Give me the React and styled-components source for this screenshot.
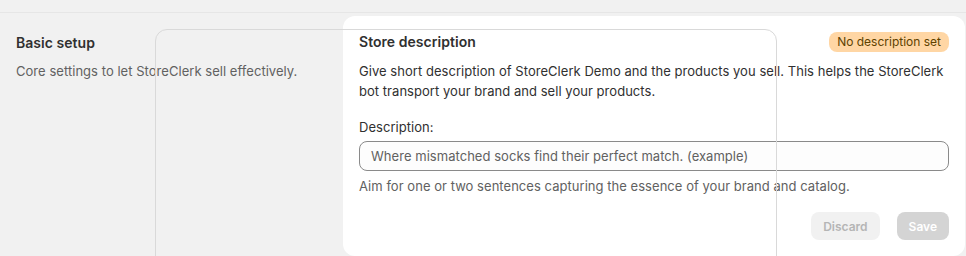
import React from "react";
import styled, { createGlobalStyle } from "styled-components";

const GlobalStyle = createGlobalStyle`
  html, body {
    margin: 0;
    padding: 0;
    background: #f1f1f1;
    font-family: Inter, "Noto Sans", sans-serif;
    letter-spacing: 0.04px;
    color: #303030;
    overflow: hidden;
  }
`;

const Page = styled.div`
  position: relative;
  width: 966px;
  height: 256px;
  overflow: hidden;
`;

const TopBar = styled.div`
  height: 12px;
  border-bottom: 1px solid #e6e6e6;
`;

const Section = styled.div`
  display: flex;
  padding: 3px 1px 0 16px;
`;

const Intro = styled.div`
  width: 327px;
  flex-shrink: 0;
  padding-top: 17px;
`;

const IntroTitle = styled.div`
  font-size: 14px;
  font-weight: 600;
  line-height: 20px;
  color: #303030;
`;

const IntroText = styled.div`
  margin-top: 8px;
  font-size: 13px;
  line-height: 20px;
  color: #616161;
`;

const Card = styled.div`
  flex: 1;
  background: #fff;
  border-radius: 12px;
  padding: 16px;
  display: flex;
  flex-direction: column;
`;

const CardHeader = styled.div`
  display: flex;
  justify-content: space-between;
  align-items: center;
  height: 20px;
`;

const CardTitle = styled.div`
  font-size: 14px;
  font-weight: 600;
  line-height: 20px;
`;

const Badge = styled.span`
  background: #ffd6a4;
  color: #5e4200;
  font-size: 12px;
  line-height: 20px;
  padding: 0 8px;
  border-radius: 8px;
  letter-spacing: 0;
`;

const Text = styled.p`
  margin: ${(p) => p.$mt || 0}px 0 0;
  font-size: 13px;
  line-height: 20px;
  color: ${(p) => (p.$muted ? "#616161" : "#303030")};
`;

const Label = styled.label`
  display: block;
  margin-top: 16px;
  font-size: 13px;
  line-height: 20px;
  color: #303030;
`;

const Input = styled.input`
  margin-top: 4px;
  height: 30px;
  box-sizing: border-box;
  width: 100%;
  border: 1px solid #8a8a8a;
  border-radius: 8px;
  background: #fdfdfd;
  padding: 0 11px;
  font-family: inherit;
  font-size: 13px;
  letter-spacing: 0.04px;
  color: #303030;
  outline: none;
  &::placeholder {
    color: #616161;
  }
`;

const Actions = styled.div`
  display: flex;
  justify-content: flex-end;
  gap: 17px;
  margin-top: 16px;
`;

const Button = styled.button`
  height: 28px;
  padding: 0 12px;
  border: none;
  border-radius: 8px;
  font-family: inherit;
  font-size: 12px;
  font-weight: 600;
  background: ${(p) => (p.$primary ? "#d4d4d4" : "#f1f1f1")};
  color: ${(p) => (p.$primary ? "#ffffff" : "#b5b5b5")};
`;

const Ghost = styled.div`
  position: absolute;
  left: 155px;
  top: 29px;
  width: 620px;
  height: 260px;
  border: 1px solid #d9d9d9;
  border-radius: 12px;
  pointer-events: none;
`;

export default function App() {
  return (
    <>
      <GlobalStyle />
      <Page>
        <TopBar />
        <Section>
          <Intro>
            <IntroTitle>Basic setup</IntroTitle>
            <IntroText>Core settings to let StoreClerk sell effectively.</IntroText>
          </Intro>
          <Card>
            <CardHeader>
              <CardTitle>Store description</CardTitle>
              <Badge>No description set</Badge>
            </CardHeader>
            <Text $mt={9}>
              Give short description of StoreClerk Demo and the products you sell. This helps the StoreClerk
              bot transport your brand and sell your products.
            </Text>
            <Label>Description:</Label>
            <Input placeholder="Where mismatched socks find their perfect match. (example)" />
            <Text $mt={5} $muted>
              Aim for one or two sentences capturing the essence of your brand and catalog.
            </Text>
            <Actions>
              <Button>Discard</Button>
              <Button $primary>Save</Button>
            </Actions>
          </Card>
        </Section>
        <Ghost />
      </Page>
    </>
  );
}
